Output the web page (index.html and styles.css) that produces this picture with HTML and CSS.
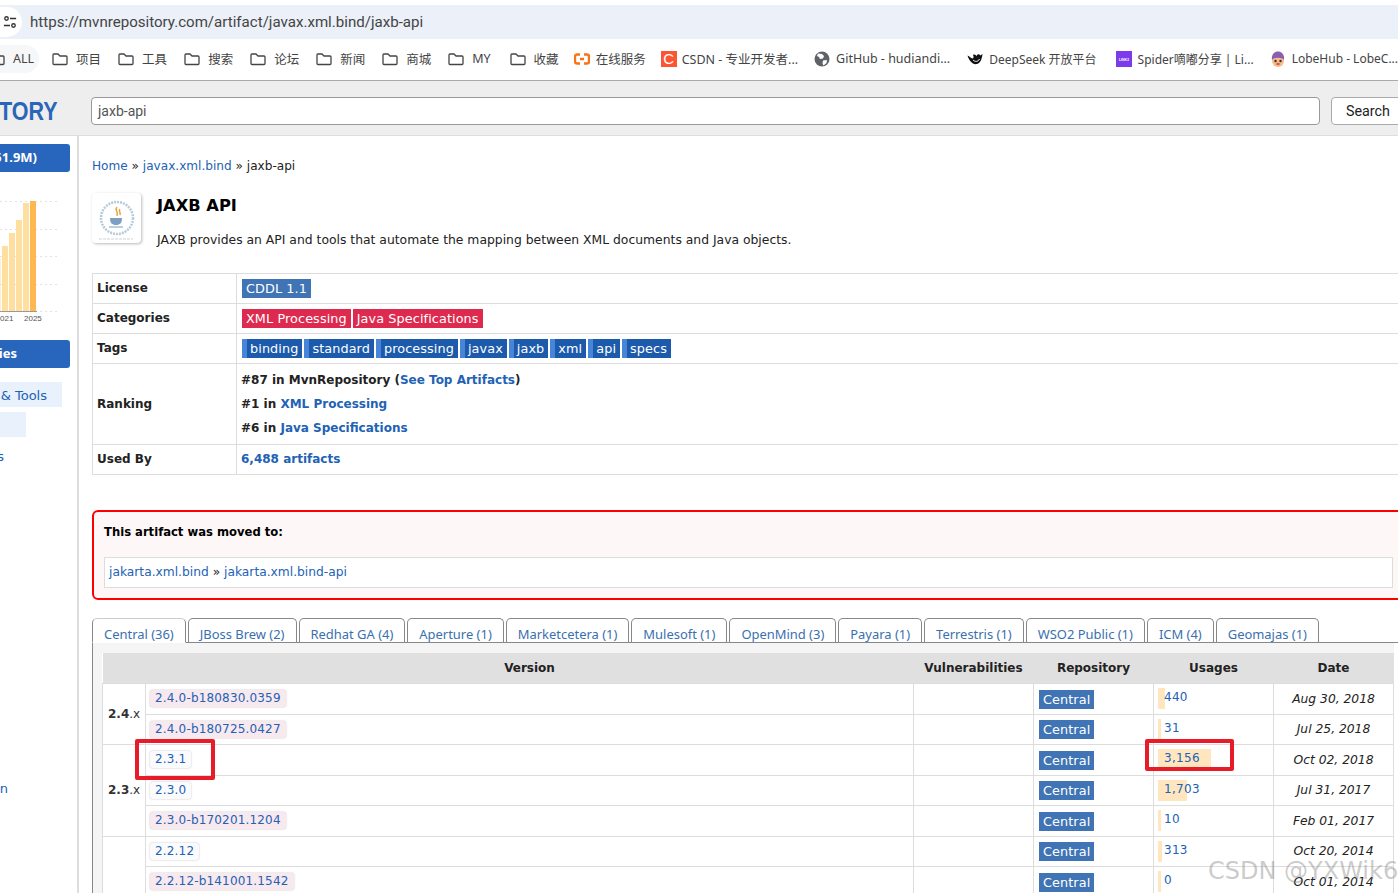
FILE: index.html
```html
<!DOCTYPE html>
<html lang="en">
<head>
<meta charset="utf-8">
<title>JAXB API</title>
<link rel="stylesheet" href="styles.css">
</head>
<body>
<div class="addr-row">
  <div class="addr">
    <span class="tune"><svg width="14" height="14" viewBox="0 0 16 16" fill="none" stroke="#333" stroke-width="1.500"><circle cx="4" cy="4" r="2"/><path d="M8 4h7M1 12h7"/><circle cx="12" cy="12" r="2"/></svg></span>
    <span class="url">https://mvnrepository.com/artifact/javax.xml.bind/jaxb-api</span>
  </div>
</div>
<div class="bookmarks">
  <span class="bm bm-all"><svg class="folder" viewBox="0 0 16 14"><path d="M1 3a1 1 0 0 1 1-1h4l2 2h6a1 1 0 0 1 1 1v6.500a1 1 0 0 1-1 1H2a1 1 0 0 1-1-1z"/></svg>ALL</span>
  <span class="bm"><svg class="folder" viewBox="0 0 16 14"><path d="M1 3a1 1 0 0 1 1-1h4l2 2h6a1 1 0 0 1 1 1v6.500a1 1 0 0 1-1 1H2a1 1 0 0 1-1-1z"/></svg>项目</span>
  <span class="bm"><svg class="folder" viewBox="0 0 16 14"><path d="M1 3a1 1 0 0 1 1-1h4l2 2h6a1 1 0 0 1 1 1v6.500a1 1 0 0 1-1 1H2a1 1 0 0 1-1-1z"/></svg>工具</span>
  <span class="bm"><svg class="folder" viewBox="0 0 16 14"><path d="M1 3a1 1 0 0 1 1-1h4l2 2h6a1 1 0 0 1 1 1v6.500a1 1 0 0 1-1 1H2a1 1 0 0 1-1-1z"/></svg>搜索</span>
  <span class="bm"><svg class="folder" viewBox="0 0 16 14"><path d="M1 3a1 1 0 0 1 1-1h4l2 2h6a1 1 0 0 1 1 1v6.500a1 1 0 0 1-1 1H2a1 1 0 0 1-1-1z"/></svg>论坛</span>
  <span class="bm"><svg class="folder" viewBox="0 0 16 14"><path d="M1 3a1 1 0 0 1 1-1h4l2 2h6a1 1 0 0 1 1 1v6.500a1 1 0 0 1-1 1H2a1 1 0 0 1-1-1z"/></svg>新闻</span>
  <span class="bm"><svg class="folder" viewBox="0 0 16 14"><path d="M1 3a1 1 0 0 1 1-1h4l2 2h6a1 1 0 0 1 1 1v6.500a1 1 0 0 1-1 1H2a1 1 0 0 1-1-1z"/></svg>商城</span>
  <span class="bm bm-my"><svg class="folder" viewBox="0 0 16 14"><path d="M1 3a1 1 0 0 1 1-1h4l2 2h6a1 1 0 0 1 1 1v6.500a1 1 0 0 1-1 1H2a1 1 0 0 1-1-1z"/></svg>MY</span>
  <span class="bm bm-fav"><svg class="folder" viewBox="0 0 16 14"><path d="M1 3a1 1 0 0 1 1-1h4l2 2h6a1 1 0 0 1 1 1v6.500a1 1 0 0 1-1 1H2a1 1 0 0 1-1-1z"/></svg>收藏</span>
  <span class="bm bm-svc"><svg class="ico" viewBox="0 0 16 16" fill="none" stroke="#f97316" stroke-width="2.400"><path d="M6 3.500H3a2 2 0 0 0-2 2v5a2 2 0 0 0 2 2h3M10 3.500h3a2 2 0 0 1 2 2v5a2 2 0 0 1-2 2h-3M6 8h4"/></svg>在线服务</span>
  <span class="bm bm-csdn"><span class="csdn-ico">C</span>CSDN - 专业开发者...</span>
  <span class="bm bm-gh"><svg class="ico" viewBox="0 0 16 16"><circle cx="8" cy="8" r="7.500" fill="#5f6368"/><path d="M4 2.500l4 .5 2 2-1 2.500-3 .5-1-2-2-1zM9 9.500l4-.5-.5 3-3 2.500-1-2z" fill="#fff"/></svg>GitHub - hudiandi...</span>
  <span class="bm bm-ds"><svg class="ico" viewBox="0 0 16 16"><path d="M0.500 4.500c1.500 5 5 9.500 9.500 8.500 3.500-.8 5-5.500 5.500-10-1.500 1-3 1.500-4.500 3.500-2-2.500-3.500-3.500-5-2.500 1 1.500.5 3.500-.5 3.500C4 7.500 2.500 5 .5 4.500z" fill="#111"/><path d="M6 9c2 2 5 2 6.500-1" fill="none" stroke="#fff"/><circle cx="11.500" cy="5" r="1.800" fill="#111"/></svg>DeepSeek 开放平台</span>
  <span class="bm bm-sp"><svg class="ico" viewBox="0 0 16 16"><rect width="16" height="16" fill="#7c3aed"/><text class="sp-txt" x="8" y="9.500">LINK3</text></svg>Spider嘀嘟分享 | Li...</span>
  <span class="bm bm-lobe"><svg class="ico" viewBox="0 0 16 16"><circle cx="8" cy="10" r="6" fill="#f6bd8a"/><path d="M2 9c-1-6 3-8.500 6-8.500s7 2.500 6 8.500C12 6 4 6 2 9z" fill="#8a5fb0"/><circle cx="5.500" cy="10" r="1.200" fill="#333"/><circle cx="10.500" cy="10" r="1.200" fill="#333"/><ellipse cx="8" cy="13" rx="1.800" ry="1.200" fill="#e2574c"/></svg>LobeHub - LobeC...</span>
</div>
<header class="site-head">
  <div class="logo"><span class="logo-text">MVN REPOSITORY</span></div>
  <div class="query">jaxb-api</div>
  <div class="search-btn">Search</div>
</header>
<div class="page">
  <aside class="side">
    <div class="side-title side-first"><span>Indexed Artifacts (51.9M)</span></div>
    <svg class="chart" width="70" height="130" viewBox="0 0 70 130">
      <g class="grid"><path d="M0 0.500H59M0 28.500H59M0 55.500H59M0 83.500H59M0 110.500H59"/></g>
      <g class="bar"><rect x="-5" y="57" width="5.500" height="53"/><rect x="2" y="45" width="6" height="65"/><rect x="9" y="32" width="6" height="78"/><rect x="16" y="19" width="6" height="91"/><rect x="23" y="2" width="6" height="108"/></g>
      <rect class="bar-last" x="30" y="0" width="6" height="110"/>
      <path class="axis" d="M0 110.500H37"/>
      <text class="chart-label" x="0" y="120">021</text>
      <text class="chart-label" x="24" y="120">2025</text>
    </svg>
    <div class="side-title side-second"><span>Popular Categories</span></div>
    <div class="side-item side-tools"><span>Testing Frameworks &amp; Tools</span></div>
    <div class="side-item side-blank"></div>
    <div class="side-link side-s"><span>Android Packages</span></div>
    <div class="side-link side-n"><span>Dependency Injection</span></div>
  </aside>
  <main class="main">
    <div class="crumbs"><a>Home</a> » <a>javax.xml.bind</a> » jaxb-api</div>
    <section class="intro">
      <div class="logo-box">
        <svg width="49" height="50" viewBox="0 0 49 50" fill="none">
          <circle cx="25" cy="25" r="16" stroke="#b5cbdb" stroke-width="2.500" stroke-dasharray="2 1"/>
          <path d="M25 14c-3 3 2 4 0 9M28 16c-2 2 1 3 0 6" stroke="#e8a33c" stroke-width="1.500"/>
          <path d="M18 25h12c0 5-2 7-6 7s-6-2-6-7z" fill="#7ba0c0"/>
          <path d="M17 34h14" stroke="#7ba0c0"/>
          <path d="M7 46h34" stroke="#e6e8ea" stroke-width="2" stroke-dasharray="3 1"/>
        </svg>
      </div>
      <div class="intro-text">
        <h1>JAXB API</h1>
        <p>JAXB provides an API and tools that automate the mapping between XML documents and Java objects.</p>
      </div>
    </section>
    <div class="info">
      <div class="info-row"><div class="info-k">License</div><div class="info-v"><span class="lic">CDDL 1.1</span></div></div>
      <div class="info-row"><div class="info-k">Categories</div><div class="info-v"><span class="cat">XML Processing</span><span class="cat">Java Specifications</span></div></div>
      <div class="info-row"><div class="info-k">Tags</div><div class="info-v"><span class="tag">binding</span><span class="tag">standard</span><span class="tag">processing</span><span class="tag">javax</span><span class="tag">jaxb</span><span class="tag">xml</span><span class="tag">api</span><span class="tag">specs</span></div></div>
      <div class="info-row info-rank"><div class="info-k">Ranking</div><div class="info-v rank">
        <div>#87 in MvnRepository (<a>See Top Artifacts</a>)</div>
        <div>#1 in <a>XML Processing</a></div>
        <div>#6 in <a>Java Specifications</a></div>
      </div></div>
      <div class="info-row"><div class="info-k">Used By</div><div class="info-v rank"><a>6,488 artifacts</a></div></div>
    </div>
    <section class="moved">
      <div class="moved-title">This artifact was moved to:</div>
      <div class="moved-box"><a>jakarta.xml.bind</a> » <a>jakarta.xml.bind-api</a></div>
    </section>
    <nav class="tabs">
      <span class="tab tab-on">Central (36)</span>
      <span class="tab">JBoss Brew (2)</span>
      <span class="tab">Redhat GA (4)</span>
      <span class="tab">Aperture (1)</span>
      <span class="tab">Marketcetera (1)</span>
      <span class="tab">Mulesoft (1)</span>
      <span class="tab">OpenMind (3)</span>
      <span class="tab">Payara (1)</span>
      <span class="tab">Terrestris (1)</span>
      <span class="tab">WSO2 Public (1)</span>
      <span class="tab">ICM (4)</span>
      <span class="tab">Geomajas (1)</span>
    </nav>
    <div class="panel">
      <table class="versions">
        <colgroup><col class="c-group"><col class="c-ver"><col class="c-vuln"><col class="c-repo"><col class="c-use"><col class="c-date"></colgroup>
        <thead><tr><th></th><th>Version</th><th>Vulnerabilities</th><th>Repository</th><th>Usages</th><th>Date</th></tr></thead>
        <tbody>
          <tr><td class="grp" rowspan="2"><b>2.4</b>.x</td><td class="ver"><a class="v v-beta">2.4.0-b180830.0359</a></td><td></td><td><span class="repo">Central</span></td><td class="use-cell"><div class="use"><i class="use-bar" style="width:7px"></i><a>440</a></div></td><td class="date">Aug 30, 2018</td></tr>
          <tr><td class="ver"><a class="v v-beta">2.4.0-b180725.0427</a></td><td></td><td><span class="repo">Central</span></td><td class="use-cell"><div class="use"><i class="use-bar" style="width:3px"></i><a>31</a></div></td><td class="date">Jul 25, 2018</td></tr>
          <tr><td class="grp" rowspan="3"><b>2.3</b>.x</td><td class="ver"><a class="v">2.3.1</a></td><td></td><td><span class="repo">Central</span></td><td class="use-cell"><div class="use"><i class="use-bar" style="width:53px"></i><a>3,156</a></div></td><td class="date">Oct 02, 2018</td></tr>
          <tr><td class="ver"><a class="v">2.3.0</a></td><td></td><td><span class="repo">Central</span></td><td class="use-cell"><div class="use"><i class="use-bar" style="width:29px"></i><a>1,703</a></div></td><td class="date">Jul 31, 2017</td></tr>
          <tr><td class="ver"><a class="v v-beta">2.3.0-b170201.1204</a></td><td></td><td><span class="repo">Central</span></td><td class="use-cell"><div class="use"><i class="use-bar" style="width:3px"></i><a>10</a></div></td><td class="date">Feb 01, 2017</td></tr>
          <tr><td class="grp" rowspan="2"></td><td class="ver"><a class="v">2.2.12</a></td><td></td><td><span class="repo">Central</span></td><td class="use-cell"><div class="use"><i class="use-bar" style="width:4px"></i><a>313</a></div></td><td class="date">Oct 20, 2014</td></tr>
          <tr><td class="ver"><a class="v v-beta">2.2.12-b141001.1542</a></td><td></td><td><span class="repo">Central</span></td><td class="use-cell"><div class="use"><i class="use-bar" style="width:3px"></i><a>0</a></div></td><td class="date">Oct 01, 2014</td></tr>
        </tbody>
      </table>
    </div>
  </main>
</div>
<div class="mark mark-ver"></div>
<div class="mark mark-use"></div>
<div class="watermark">CSDN @YXWik6</div>
</body>
</html>
```
FILE: styles.css
```css
html, body { margin: 0; height: 893px; overflow: hidden; background: #fff; }
body { font-family: "DejaVu Sans", "Noto Sans CJK SC", sans-serif; font-size: 12px; color: #222; position: relative; width: 1398px; }
a { color: #2262b5; text-decoration: none; }

.addr-row { height: 40px; box-sizing: border-box; padding-top: 5px; }
.addr { height: 34px; background: #ebf0f9; display: flex; align-items: center; }
.tune { width: 22px; height: 30px; border-radius: 0 15px 15px 0; background: #fff; display: flex; align-items: center; justify-content: flex-end; overflow: hidden; flex: none; }
.tune svg { flex: none; margin-right: 5px; }
.url { margin-left: 8px; font-family: "Roboto", "Noto Sans", sans-serif; font-size: 15.080px; color: #444; }

.bookmarks { height: 37px; padding-bottom: 3px; border-bottom: 1px solid #aaa; display: flex; align-items: center; font-family: "Noto Sans", "Noto Sans CJK SC", sans-serif; font-size: 12.500px; color: #444; white-space: nowrap; overflow: hidden; }
.bm { display: inline-flex; align-items: center; margin-right: 17px; flex: none; }
.bm-all { margin-left: -11px; margin-right: 13px; padding: 0 5px 0 0; height: 28px; border-radius: 0 14px 14px 0; background: #f6f7f8; }
.bm-my { margin-right: 19px; }
.bm-fav { margin-right: 15px; }
.bm-svc { margin-right: 15px; }
.bm-csdn { margin-right: 16px; }
.bm-gh { margin-right: 17px; }
.bm-ds { margin-right: 19px; font-size: 12px; }
.bm-sp { margin-right: 16px; font-size: 12px; }
.bm-lobe { font-size: 12px; }
.folder { width: 16px; height: 14px; margin-right: 8px; fill: none; stroke: #444; stroke-width: 1.300; flex: none; }
.ico { width: 16px; height: 16px; margin-right: 6px; flex: none; }
.sp-txt { font-family: "Liberation Sans", sans-serif; font-size: 3.500px; font-weight: bold; fill: #fff; text-anchor: middle; }
.csdn-ico { width: 16px; height: 16px; margin-right: 5px; background: #fc5531; color: #fff; font: 15px/16px "Liberation Sans", sans-serif; text-align: center; flex: none; }

.site-head { height: 48px; padding-top: 6px; background: #eee; border-bottom: 1px solid #ddd; display: flex; align-items: center; overflow: hidden; }
.logo { width: 91px; height: 30px; flex: none; display: flex; justify-content: flex-end; overflow: hidden; }
.logo-text { flex: none; padding-right: 39px; font: bold 25px/30px "Liberation Sans", sans-serif; color: #2a66b8; transform: scaleX(.86); transform-origin: right; white-space: nowrap; }
.query { width: 1229px; height: 28px; box-sizing: border-box; flex: none; background: #fff; border: 1px solid #999; border-radius: 4px; padding-left: 6px; line-height: 26px; font-family: "Roboto", sans-serif; font-size: 14px; color: #555; }
.search-btn { margin-left: 11px; width: 80px; flex: none; height: 28px; box-sizing: border-box; background: #fff; border: 1px solid #aaa; border-radius: 4px; padding-left: 14px; line-height: 26px; font-family: "Roboto", sans-serif; font-size: 14.300px; color: #222; }

.page { display: flex; height: 757px; }
.side { width: 77px; flex: none; border-right: 2px solid #ddd; overflow: hidden; }
.side-title { width: 70px; height: 28px; margin-top: 8px; background: #2866bd; color: #fff; font-family: "Noto Sans", sans-serif; font-weight: bold; font-size: 13px; line-height: 27px; border-radius: 0 3px 3px 0; display: flex; justify-content: flex-end; white-space: nowrap; overflow: hidden; }
.side-title span { flex: none; padding-right: 33px; }
.side-second span { padding-right: 53px; }
.side-second { margin-top: 9px; }
.chart { display: block; margin-top: 29px; overflow: hidden; }
.grid path { stroke: #e3e3e3; stroke-dasharray: 2 3; fill: none; }
.bar rect { fill: #ffdf9f; }
.bar-last { fill: #ffb84f; }
.axis { stroke: #999; fill: none; }
.chart-label { font-family: "Liberation Sans", sans-serif; font-size: 8px; fill: #555; }
.side-item { height: 25px; background: #e8f1fc; display: flex; justify-content: flex-end; white-space: nowrap; overflow: hidden; line-height: 27px; color: #2262b5; font-size: 13px; }
.side-item span { flex: none; }
.side-tools { width: 62px; margin-top: 14px; }
.side-tools span { padding-right: 15px; }
.side-blank { width: 26px; margin-top: 5px; }
.side-link { display: flex; justify-content: flex-end; white-space: nowrap; overflow: hidden; color: #2262b5; font-size: 13px; }
.side-link span { flex: none; }
.side-s { width: 4px; margin-top: 12px; }
.side-n { width: 8px; margin-top: 317px; }

.main { flex: 1; min-width: 0; padding-left: 13px; overflow: hidden; }
.crumbs { margin-top: 21px; height: 20px; line-height: 18px; font-size: 12.100px; }
.intro { display: flex; margin-top: 17px; }
.logo-box { width: 49px; height: 50px; background: #fff; border-radius: 4px; box-shadow: 1px 1px 3px #bbb; flex: none; margin-top: -1px; }
.logo-box svg { display: block; }
.intro-text { margin-left: 16px; }
.intro-text h1 { margin: 0; font-size: 16.300px; line-height: 24px; color: #000; font-weight: bold; }
.intro-text p { margin: 13px 0 0; font-size: 12.370px; line-height: 18px; white-space: nowrap; }

.info { width: 1400px; margin-top: 24px; border: 1px solid #ddd; border-right: 0; }
.info-row { display: flex; height: 29px; border-bottom: 1px solid #ddd; }
.info-row:last-child { border-bottom: 0; }
.info-rank { height: 80px; }
.info-k { box-sizing: border-box; width: 144px; flex: none; padding: 0 0 2px 4px; border-right: 1px solid #ddd; font-weight: bold; display: flex; align-items: center; }
.info-rank .info-k { padding-bottom: 0; }
.info-v { padding-left: 5px; display: flex; align-items: center; white-space: nowrap; gap: 2px; }
.lic, .cat, .tag, .repo { color: #fff; font-size: 12.800px; line-height: 19px; height: 19px; padding: 0 4px; letter-spacing: .1px; }
.lic, .repo { background: #4074b5; }
.cat { background: #df2a50; }
.tag { background: #1c5bac; border-left: 5px solid #4785d8; padding: 0 4px 0 3px; }
.info-v.rank { font-weight: bold; padding: 0 0 2px 4px; }
.info-rank .info-v.rank { display: block; padding: 4px 0 0 4px; }
.rank div { line-height: 24px; height: 24px; }

.moved { width: 1350px; height: 90px; box-sizing: border-box; margin-top: 35px; background: #fdf7f7; border: 2px solid #f00; border-radius: 6px; padding-left: 10px; }
.moved-title { font-weight: bold; font-size: 11.600px; margin-top: 11px; line-height: 18px; color: #000; }
.moved-box { width: 1289px; height: 31px; box-sizing: border-box; margin-top: 16px; border: 1px solid #ddd; background: #fff; padding-left: 4px; line-height: 29px; font-size: 12.260px; }

.tabs { display: flex; gap: 2px; height: 24px; margin-top: 18px; width: 1400px; border-bottom: 1px solid #888; }
.tab { height: 24px; box-sizing: border-box; padding: 0 11px; line-height: 31px; border: 1px solid #888; border-bottom: 0; border-radius: 5px 5px 0 0; color: #3a70ae; font-family: "Noto Sans", sans-serif; font-size: 12.950px; white-space: nowrap; background: #fff; flex: none; }
.tab-on { height: 25px; position: relative; border-color: #ccc #888 #fff #888; border-bottom: 1px solid #fff; }

.panel { width: 1400px; border-left: 1px solid #888; padding: 10px 0 0 9px; background: linear-gradient(#f5f5f5, #f5f5f5) 0 0 / 1301px 100% no-repeat; box-sizing: border-box; }
.versions { width: 1292px; border-collapse: collapse; table-layout: fixed; background: #fff; }
.c-group { width: 43px; } .c-ver { width: 768px; } .c-vuln, .c-repo, .c-use, .c-date { width: 120px; }
.versions th { height: 30px; background: #e0e0e0; padding: 0; color: #222; }
.versions td { height: 30.500px; padding: 0 0 0 5px; border: 1px solid #ddd; white-space: nowrap; box-sizing: border-box; }
.versions td.grp { color: #333; }
.versions td.ver { padding-left: 4px; }
.v { display: inline-block; line-height: 17px; padding: 0 5px; border-radius: 3px; background: #fbfbfe; box-shadow: 0 0 2px #bbb; letter-spacing: .17px; }
.v-beta { background: #f8e9ee; }
.repo { display: inline-block; margin-top: 1px; }
.versions td.use-cell { padding-left: 4px; }
.use { position: relative; height: 21px; line-height: 18px; padding-left: 6px; }
.use-bar { position: absolute; left: 0; top: 0; height: 21px; background: #ffe6bf; }
.use a { position: relative; letter-spacing: .3px; }
.versions td.date { text-align: center; font-style: italic; padding: 0; font-size: 12.300px; }

.mark { position: absolute; box-sizing: border-box; border: 4px solid #e81c28; border-radius: 2px; }
.mark-ver { left: 135px; top: 739px; width: 80px; height: 41px; }
.mark-use { left: 1145px; top: 739px; width: 89px; height: 32px; }
.watermark { position: absolute; left: 1208px; top: 854px; font-size: 24px; line-height: 34px; color: rgba(120,120,120,.4); white-space: nowrap; }
```
